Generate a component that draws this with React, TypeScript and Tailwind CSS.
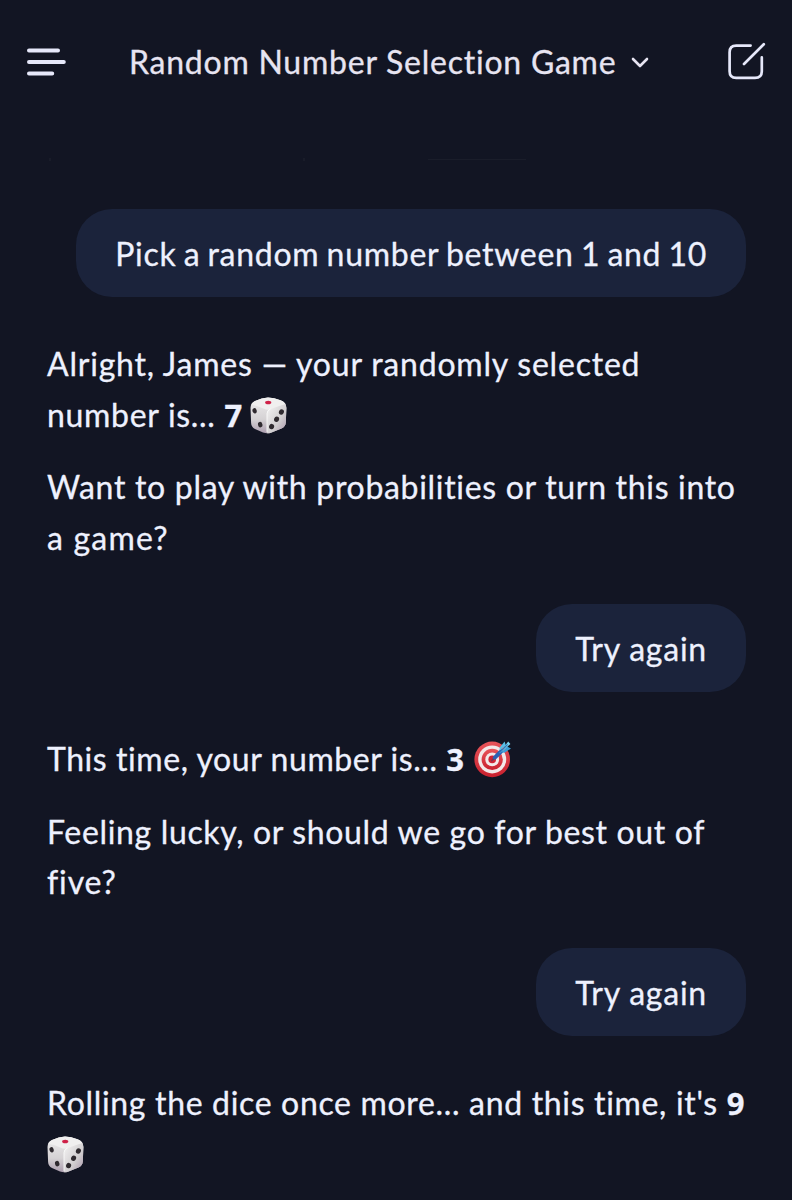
import type { ReactNode } from "react"

function MenuIcon() {
  return (
    <svg width="42" height="30" viewBox="0 0 42 30" fill="none" stroke="#e6e8fa" strokeWidth="4" strokeLinecap="round">
      <path d="M5 3.5H34M5 15H39.8M5 26.5H28.2" />
    </svg>
  )
}

function ComposeIcon() {
  return (
    <svg width="40" height="42" viewBox="0 0 40 42" fill="none" stroke="#e6e8fa" strokeWidth="2.7" strokeLinecap="round" strokeLinejoin="round">
      <path d="M23.6 4.6H9.2Q2.6 4.6 2.6 11.2V30.2Q2.6 36.8 9.2 36.8H28Q34.8 36.8 34.8 30.2V16.4" />
      <path d="M17 23L36.8 3.2" />
    </svg>
  )
}

function Dice() {
  return (
    <svg className="inline-block align-[-7px]" width="37" height="37" viewBox="0 0 37 37">
      <defs>
        <linearGradient id="diceLeft" x1="0" y1="0" x2="0" y2="1">
          <stop offset="0" stopColor="#eeedee" />
          <stop offset="0.6" stopColor="#d5d2d4" />
          <stop offset="1" stopColor="#aa9bad" />
        </linearGradient>
        <linearGradient id="diceRight" x1="0" y1="0" x2="1" y2="1">
          <stop offset="0" stopColor="#f7f6f6" />
          <stop offset="0.6" stopColor="#d0cdcf" />
          <stop offset="1" stopColor="#a792a8" />
        </linearGradient>
        <clipPath id="diceBody">
          <path d="M18 .6Q24 .7 30.5 3.3Q36.4 5.4 36.4 11L35.8 25.5Q35.6 29.6 31.5 31.5L21 35.7Q17 37 13 35.5L5 32Q1.3 30 1.1 26L.5 11Q.6 6 5 4Q12 .7 18 .6Z" />
        </clipPath>
      </defs>
      <g clipPath="url(#diceBody)">
        <rect width="37" height="37" fill="url(#diceLeft)" />
        <path d="M16.8 37V16.5Q17 13 20.5 11.8L37 6V37Z" fill="url(#diceRight)" />
        <path d="M0 0H37V6.5Q30 8.5 21 12Q17.5 13.4 14 11.8Q7 8.6 0 7.5Z" fill="#f0efef" />
        <path d="M17 35V16.5Q17.2 13.2 20.5 12" fill="none" stroke="#fff" strokeOpacity="0.7" strokeWidth="1" />
      </g>
      <ellipse cx="18.2" cy="5.5" rx="3.1" ry="1.8" fill="#cf2148" />
      <g fill="#2f2a2f">
        <ellipse cx="4.6" cy="13.8" rx="2.1" ry="2.7" transform="rotate(-15 4.6 13.8)" />
        <ellipse cx="10.2" cy="27.6" rx="2.2" ry="2.8" transform="rotate(-15 10.2 27.6)" />
        <ellipse cx="31.4" cy="15" rx="2.5" ry="2.7" transform="rotate(25 31.4 15)" />
        <ellipse cx="26.6" cy="22.2" rx="2.5" ry="2.7" transform="rotate(25 26.6 22.2)" />
        <ellipse cx="21.6" cy="29.6" rx="2.5" ry="2.7" transform="rotate(25 21.6 29.6)" />
      </g>
    </svg>
  )
}

function Target() {
  return (
    <svg className="ml-0.5 inline-block align-[-7px]" width="38" height="38" viewBox="0 0 38 38">
      <defs>
        <linearGradient id="ring" x1="0" y1="0" x2="0" y2="1">
          <stop offset="0" stopColor="#e8555a" />
          <stop offset="1" stopColor="#c9202e" />
        </linearGradient>
      </defs>
      <circle cx="18.2" cy="19.4" r="17.8" fill="url(#ring)" />
      <circle cx="18.2" cy="19.4" r="14" fill="#f3e9e9" />
      <circle cx="18.2" cy="19.4" r="10.6" fill="url(#ring)" />
      <circle cx="18.2" cy="19.4" r="6.9" fill="#f3e9e9" />
      <circle cx="18.2" cy="19.4" r="3.8" fill="#cf2434" />
      <path d="M17.8 20.6L23 15.5" stroke="#7d3550" strokeWidth="1.8" strokeLinecap="round" />
      <path d="M20.8 17.6L27.5 11" stroke="#2b62b4" strokeWidth="4" strokeLinecap="round" />
      <path d="M25.4 10.8L25.8 7.4L30.6 1.4L31.8 5.2Z" fill="#58bfe6" />
      <path d="M27.6 12.8L31 12.4L37 8.4L33 6.6Z" fill="#3b9fd6" />
      <path d="M25.2 13.2L34.2 1.6L36.4 4L28 11.8Z" fill="#7fd6f2" />
      <path d="M26 12.4L33.6 4.4" stroke="#2878bd" strokeWidth="1.3" />
    </svg>
  )
}

function Bubble({ children }: { children: ReactNode }) {
  return (
    <div className="flex h-[88px] items-center self-end rounded-[36px] bg-[#1b233b] pt-0.5 pr-[39px] pl-[39px] whitespace-nowrap">
      {children}
    </div>
  )
}

function Num({ children }: { children: ReactNode }) {
  return <strong className="font-['Open_Sans',sans-serif] text-[31px] font-bold tracking-normal">{children}</strong>
}

export default function App() {
  return (
    <div className="flex h-[1200px] w-[792px] flex-col overflow-hidden bg-[#121523] font-[Lato,'Liberation_Sans',sans-serif] text-[32px] leading-[50.5px] text-[#eef1fe] [-webkit-text-stroke:0.3px]">
      <header className="flex h-[124px] shrink-0 items-center pr-[25px] pl-6 text-[#e7e4f1]">
        <MenuIcon />
        <div className="ml-[63px] flex flex-1 items-center gap-[15px]">
          <h1 className="tracking-[0.76px] whitespace-nowrap">Random Number Selection Game</h1>
          <svg className="mt-0.5" width="18" height="12" viewBox="0 0 18 12" fill="none" stroke="currentColor" strokeWidth="2.6" strokeLinecap="round" strokeLinejoin="round">
            <path d="M2 2L9 9L16 2" />
          </svg>
        </div>
        <ComposeIcon />
      </header>

      {/* underline of the message scrolled away beneath the header */}
      <div className="flex h-[85px] shrink-0 items-start pt-[34px] pl-[49px]">
        <div className="h-[3px] w-0.5 bg-[#191c29]" />
        <div className="ml-[252px] h-[3px] w-0.5 bg-[#191c29]" />
        <div className="mt-px ml-[123px] h-px w-[98px] bg-[#1a1d2a]" />
      </div>

      <main className="flex flex-col pr-[46px] pl-[47px]">
        <Bubble>
          <span className="tracking-[0.72px] [word-spacing:-1.7px]">Pick a random number between 1 and 10</span>
        </Bubble>

        <div className="mt-[42px] mb-[41px] flex flex-col gap-[22px] whitespace-nowrap">
          <p>
            <span className="tracking-[0.79px]">Alright, James — your randomly selected</span>
            <br />
            <span className="tracking-[0.7px]">number is... </span>
            <Num>7</Num>
            <span className="ml-2">
              <Dice />
            </span>
          </p>
          <p>
            <span className="tracking-[0.69px]">Want to play with probabilities or turn this into</span>
            <br />
            <span className="tracking-[1.2px]">a game?</span>
          </p>
        </div>

        <Bubble>
          <span className="tracking-[0.77px]">Try again</span>
        </Bubble>

        <div className="mt-[42px] mb-[40.5px] flex flex-col gap-[22px] whitespace-nowrap">
          <p>
            <span className="tracking-[0.57px]">This time, your number is... </span>
            <Num>3</Num> <Target />
          </p>
          <p>
            <span className="tracking-[0.66px]">Feeling lucky, or should we go for best out of</span>
            <br />
            <span className="tracking-[0.88px]">five?</span>
          </p>
        </div>

        <Bubble>
          <span className="tracking-[0.77px]">Try again</span>
        </Bubble>

        <p className="mt-[42px] whitespace-nowrap">
          <span className="tracking-[0.67px]">Rolling the dice once more... and this time, it's </span>
          <Num>9</Num>
          <br />
          <Dice />
        </p>
      </main>
    </div>
  )
}
